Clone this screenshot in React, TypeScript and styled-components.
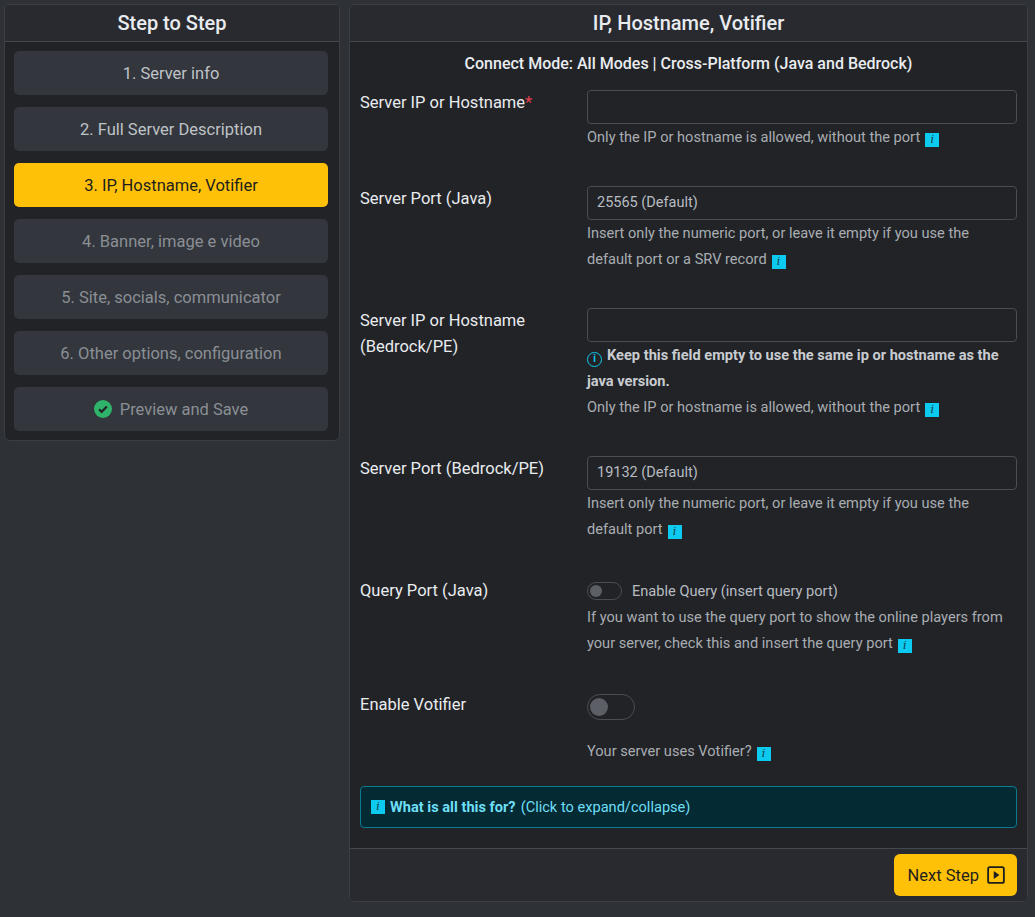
import * as React from 'react';
import styled, {createGlobalStyle} from 'styled-components';

const Global = createGlobalStyle`
  html, body { margin: 0; background: #2e3136; }
  body { font-family: Roboto, "Noto Sans", sans-serif; color: #dee2e6; }
`;

const Page = styled.div`
  display: flex;
  align-items: flex-start;
  gap: 9px;
  padding: 4px 12px 10px 4px;
`;

const Card = styled.section<{ $w: number }>`
  width: ${p => p.$w}px;
  background: #212327;
  border: 1px solid #3b3e44;
  border-radius: 6px;
  overflow: hidden;
  flex-shrink: 0;
`;

const CardHeader = styled.h2`
  margin: 0;
  height: 36px;
  line-height: 36px;
  text-align: center;
  font-size: 20px;
  font-weight: 500;
  background: #282a2f;
  border-bottom: 1px solid #45484e;
  color: #e9ecef;
`;

const StepList = styled.div`
  display: flex;
  flex-direction: column;
  gap: 12px;
  padding: 9px 11px 9px 9px;
`;

const Step = styled.div<{ $active?: boolean; $disabled?: boolean }>`
  height: 44px;
  border-radius: 5px;
  display: flex;
  align-items: center;
  justify-content: center;
  gap: 8px;
  font-size: 16.5px;
  background: ${p => (p.$active ? '#ffc107' : '#33363c')};
  color: ${p => (p.$active ? '#1e1e1e' : p.$disabled ? '#8a8f96' : '#bfc3c8')};
`;

const Body = styled.div`
  padding: 12px 10px 20px 10px;
`;

const Mode = styled.div`
  text-align: center;
  font-weight: 500;
  font-size: 16px;
  color: #e9ecef;
  margin-bottom: 17px;
`;

const Row = styled.div<{ $gap?: number }>`
  display: grid;
  grid-template-columns: 227px 1fr;
  margin-bottom: ${p => p.$gap ?? 36}px;
`;

const Label = styled.div`
  font-size: 16.5px;
  line-height: 26px;
  color: #e9ecef;
`;

const Req = styled.span`
  color: #e0404f;
`;

const Input = styled.div`
  height: 32px;
  border: 1px solid #4a4d53;
  border-radius: 4px;
  background: #212327;
  font-size: 14.5px;
  line-height: 32px;
  padding: 0 9px;
  color: #b8bcc1;
`;

const Help = styled.div<{ $bold?: boolean }>`
  font-size: 14.6px;
  line-height: 26px;
  color: ${p => (p.$bold ? '#c8ccd0' : '#a9adb2')};
  font-weight: ${p => (p.$bold ? 700 : 400)};
`;

const InfoBox = styled.span`
  display: inline-block;
  width: 14px;
  height: 14px;
  line-height: 14px;
  text-align: center;
  background: #0dcaf0;
  color: #0b3a46;
  font-size: 11px;
  font-style: italic;
  font-weight: 400;
  font-family: "DejaVu Serif", serif;
  margin-left: 5px;
  vertical-align: -1px;
`;

const Circle = styled.span`
  display: inline-block;
  box-sizing: border-box;
  width: 15px;
  height: 15px;
  line-height: 12px;
  text-align: center;
  border: 1.5px solid #0dcaf0;
  border-radius: 50%;
  color: #0dcaf0;
  font-size: 10px;
  margin-right: 5px;
  vertical-align: -2px;
  font-weight: 700;
`;

const Switch = styled.span<{ $big?: boolean }>`
  display: inline-block;
  position: relative;
  width: ${p => (p.$big ? 46 : 33)}px;
  height: ${p => (p.$big ? 24 : 16)}px;
  border: 1px solid #4a4d53;
  border-radius: 20px;
  vertical-align: middle;
  &::after {
    content: '';
    position: absolute;
    left: 2px;
    top: 50%;
    transform: translateY(-50%);
    width: ${p => (p.$big ? 18 : 12)}px;
    height: ${p => (p.$big ? 18 : 12)}px;
    border-radius: 50%;
    background: #5c5f65;
  }
`;

const SwitchLine = styled.div<{ $h?: number }>`
  display: flex;
  align-items: center;
  gap: 10px;
  font-size: 14.6px;
  color: #b8bcc1;
  height: ${p => p.$h ?? 26}px;
`;

const Collapse = styled.div`
  border: 1px solid #0a7b90;
  background: #042a33;
  border-radius: 4px;
  height: 40px;
  display: flex;
  align-items: center;
  padding: 0 10px;
  font-size: 14.6px;
  color: #6edff6;
  gap: 5px;
  & b { font-weight: 700; }
`;

const Footer = styled.div`
  border-top: 1px solid #45484e;
  background: #282a2f;
  display: flex;
  justify-content: flex-end;
  padding: 5px 10px 5px;
`;

const NextBtn = styled.button`
  height: 42px;
  padding: 0 12px 0 14px;
  background: #ffc107;
  border: none;
  border-radius: 6px;
  font: 16.5px Roboto, sans-serif;
  color: #1e1e1e;
  display: flex;
  align-items: center;
  gap: 8px;
`;

const Info = () => <InfoBox>i</InfoBox>;

export default function App() {
  return (
    <>
      <Global />
      <Page>
        <Card $w={334}>
          <CardHeader>Step to Step</CardHeader>
          <StepList>
            <Step>1. Server info</Step>
            <Step>2. Full Server Description</Step>
            <Step $active>3. IP, Hostname, Votifier</Step>
            <Step $disabled>4. Banner, image e video</Step>
            <Step $disabled>5. Site, socials, communicator</Step>
            <Step $disabled>6. Other options, configuration</Step>
            <Step $disabled>
              <svg width="18" height="18" viewBox="0 0 16 16">
                <circle cx="8" cy="8" r="8" fill="#2fb36b" />
                <path d="M4.5 8.2l2.3 2.3 4.6-4.8" stroke="#212327" strokeWidth="2" fill="none" />
              </svg>
              Preview and Save
            </Step>
          </StepList>
        </Card>
        <Card $w={677}>
          <CardHeader>IP, Hostname, Votifier</CardHeader>
          <Body>
            <Mode>Connect Mode: All Modes | Cross-Platform (Java and Bedrock)</Mode>
            <Row>
              <Label>Server IP or Hostname<Req>*</Req></Label>
              <div>
                <Input />
                <Help>Only the IP or hostname is allowed, without the port<Info /></Help>
              </div>
            </Row>
            <Row>
              <Label>Server Port (Java)</Label>
              <div>
                <Input>25565 (Default)</Input>
                <Help>Insert only the numeric port, or leave it empty if you use the default port or a SRV record<Info /></Help>
              </div>
            </Row>
            <Row>
              <Label>Server IP or Hostname<br />(Bedrock/PE)</Label>
              <div>
                <Input />
                <Help $bold><Circle>i</Circle>Keep this field empty to use the same ip or hostname as the java version.</Help>
                <Help>Only the IP or hostname is allowed, without the port<Info /></Help>
              </div>
            </Row>
            <Row>
              <Label>Server Port (Bedrock/PE)</Label>
              <div>
                <Input>19132 (Default)</Input>
                <Help>Insert only the numeric port, or leave it empty if you use the default port<Info /></Help>
              </div>
            </Row>
            <Row>
              <Label>Query Port (Java)</Label>
              <div>
                <SwitchLine><Switch />Enable Query (insert query port)</SwitchLine>
                <Help>If you want to use the query port to show the online players from your server, check this and insert the query port<Info /></Help>
              </div>
            </Row>
            <Row $gap={22}>
              <Label>Enable Votifier</Label>
              <div>
                <SwitchLine $h={30}><Switch $big /></SwitchLine>
                <Help style={{ marginTop: 16 }}>Your server uses Votifier?<Info /></Help>
              </div>
            </Row>
            <Collapse>
              <InfoBox style={{ marginLeft: 0 }}>i</InfoBox>
              <b>What is all this for?</b> (Click to expand/collapse)
            </Collapse>
          </Body>
          <Footer>
            <NextBtn>
              Next Step
              <svg width="18" height="18" viewBox="0 0 16 16">
                <rect x="1" y="1" width="14" height="14" rx="1.5" fill="none" stroke="#1e1e1e" strokeWidth="1.6" />
                <path d="M6 4.5v7l5-3.5z" fill="#1e1e1e" />
              </svg>
            </NextBtn>
          </Footer>
        </Card>
      </Page>
    </>
  );
}
